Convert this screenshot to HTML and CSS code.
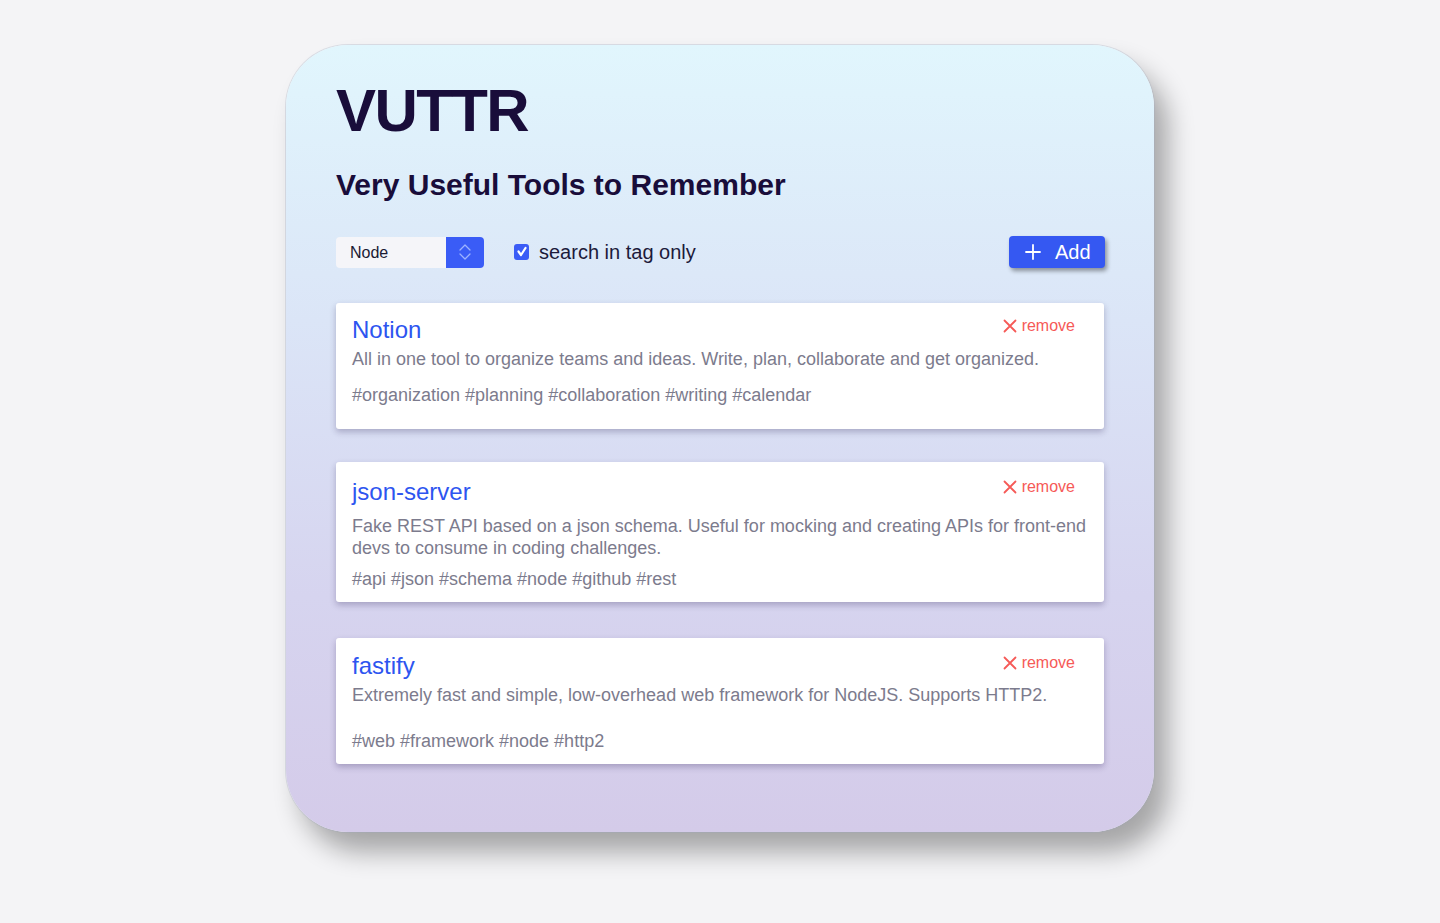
FILE: index.html
```html
<!DOCTYPE html>
<html lang="en">
<head>
<meta charset="utf-8">
<title>VUTTR</title>
<link rel="stylesheet" href="styles.css">
</head>
<body>
<main class="app">
  <h1 class="app-title">VUTTR</h1>
  <h2 class="app-subtitle">Very Useful Tools to Remember</h2>

  <div class="toolbar">
    <div class="select">
      <span class="select-value">Node</span>
      <span class="select-arrow">
        <svg width="14" height="18" viewBox="0 0 14 18" fill="none" stroke="#9db3ff" stroke-width="1.3" stroke-linecap="round" stroke-linejoin="round"><path d="M2 7 L7 2 L12 7"/><path d="M2 11 L7 16 L12 11"/></svg>
      </span>
    </div>
    <label class="check">
      <span class="check-box">
        <svg width="12" height="12" viewBox="0 0 12 12" fill="none" stroke="#fff" stroke-width="2.2" stroke-linecap="round" stroke-linejoin="round"><path d="M2.5 5.5 L5 9 L9.5 2"/></svg>
      </span>
      <span class="check-label">search in tag only</span>
    </label>
    <button class="add-btn">
      <svg width="16" height="16" viewBox="0 0 16 16" stroke="#fff" stroke-width="1.8" stroke-linecap="round"><path d="M8 1 V15 M1 8 H15"/></svg>
      <span>Add</span>
    </button>
  </div>

  <section class="cards">
    <article class="card card--one">
      <div class="card-head">
        <a class="card-title">Notion</a>
        <button class="remove"><svg width="14" height="14" viewBox="0 0 14 14" stroke="#f65a57" stroke-width="1.8" stroke-linecap="round"><path d="M1.5 1.5 L12.5 12.5 M12.5 1.5 L1.5 12.5"/></svg>remove</button>
      </div>
      <p class="card-desc">All in one tool to organize teams and ideas. Write, plan, collaborate and get organized.</p>
      <p class="card-tags">#organization #planning #collaboration #writing #calendar</p>
    </article>

    <article class="card card--two">
      <div class="card-head">
        <a class="card-title">json-server</a>
        <button class="remove"><svg width="14" height="14" viewBox="0 0 14 14" stroke="#f65a57" stroke-width="1.8" stroke-linecap="round"><path d="M1.5 1.5 L12.5 12.5 M12.5 1.5 L1.5 12.5"/></svg>remove</button>
      </div>
      <p class="card-desc">Fake REST API based on a json schema. Useful for mocking and creating APIs for front&#8209;end devs to consume in coding challenges.</p>
      <p class="card-tags">#api #json #schema #node #github #rest</p>
    </article>

    <article class="card card--three">
      <div class="card-head">
        <a class="card-title">fastify</a>
        <button class="remove"><svg width="14" height="14" viewBox="0 0 14 14" stroke="#f65a57" stroke-width="1.8" stroke-linecap="round"><path d="M1.5 1.5 L12.5 12.5 M12.5 1.5 L1.5 12.5"/></svg>remove</button>
      </div>
      <p class="card-desc">Extremely fast and simple, low-overhead web framework for NodeJS. Supports HTTP2.</p>
      <p class="card-tags">#web #framework #node #http2</p>
    </article>
  </section>
</main>
</body>
</html>
```

FILE: styles.css
```css
* { box-sizing: border-box; }

html, body {
  margin: 0;
  padding: 0;
}

body {
  background: #f4f4f6;
  font-family: "Liberation Sans", Arial, Helvetica, sans-serif;
  min-height: 923px;
  padding-top: 45px;
}

.app {
  width: 868px;
  height: 787px;
  margin: 0 auto;
  padding: 31px 50px 0 50px;
  border-radius: 62px;
  background: linear-gradient(180deg, #e1f6fd 0%, #dbe5f7 35%, #d6d4ef 70%, #d4cbe9 100%);
  box-shadow: 0 0 0 1px rgba(160, 170, 190, 0.3), 14px 20px 26px rgba(0, 0, 0, 0.32);
}

.app-title {
  margin: 0;
  font-size: 60px;
  line-height: 69px;
  font-weight: 700;
  letter-spacing: -1.6px;
  color: #190d3a;
}

.app-subtitle {
  margin: 24px 0 0 0;
  font-size: 30px;
  line-height: 32px;
  font-weight: 700;
  color: #190d3a;
}

.toolbar {
  margin-top: 35px;
  display: flex;
  align-items: center;
  height: 32px;
}

.select {
  display: flex;
  width: 148px;
  height: 31px;
  border-radius: 4px;
  overflow: hidden;
  background: #f5f5f9;
}

.select-value {
  flex: 1;
  padding-left: 14px;
  font-size: 16px;
  line-height: 31px;
  color: #1a1a33;
}

.select-arrow {
  width: 38px;
  background: #3a5cf6;
  display: flex;
  align-items: center;
  justify-content: center;
}

.check {
  margin-left: 30px;
  display: flex;
  align-items: center;
}

.check-box {
  width: 15px;
  height: 16px;
  border-radius: 3px;
  background: #3a5cf6;
  display: flex;
  align-items: center;
  justify-content: center;
}

.check-label {
  margin-left: 10px;
  font-size: 20px;
  color: #1c1a3b;
}

.add-btn {
  margin-left: auto;
  margin-right: -1px;
  width: 96px;
  height: 32px;
  border: none;
  border-radius: 4px;
  background: #3558f2;
  color: #fff;
  font-family: inherit;
  font-size: 20px;
  display: flex;
  align-items: center;
  padding: 0 0 0 16px;
  gap: 14px;
  box-shadow: 2px 3px 4px rgba(0, 0, 0, 0.38);
}

.cards {
  margin-top: 35px;
  display: flex;
  flex-direction: column;
}

.card {
  background: #fff;
  border-radius: 3px;
  padding: 12px 14px 23px 16px;
  box-shadow: 0 3px 6px rgba(40, 30, 80, 0.28);
}

.card--two {
  margin-top: 33px;
  padding-top: 15px;
  padding-bottom: 12px;
}

.card--three {
  margin-top: 36px;
  padding-top: 13px;
  padding-bottom: 12px;
}

.card-head {
  display: flex;
  align-items: flex-start;
  justify-content: space-between;
  height: 30px;
}

.card-title {
  font-size: 24px;
  line-height: 30px;
  color: #2d55f0;
}

.remove {
  margin: 2px 15px 0 0;
  border: none;
  background: none;
  padding: 0;
  display: flex;
  align-items: center;
  gap: 5px;
  font-family: inherit;
  font-size: 16px;
  line-height: 18px;
  color: #f65a57;
}

.card--two .remove { margin-top: 1px; }
.card--three .remove { margin-top: 3px; }

.card-desc {
  margin: 3px 0 0 0;
  font-size: 18px;
  line-height: 22px;
  color: #7c7b8d;
}

.card--two .card-desc { margin-top: 8px; }
.card--three .card-desc { margin-top: 3px; }

.card-tags {
  margin: 14px 0 0 0;
  font-size: 18px;
  line-height: 22px;
  color: #7c7b8d;
}

.card--two .card-tags { margin-top: 9px; }
.card--three .card-tags { margin-top: 24px; }
```
